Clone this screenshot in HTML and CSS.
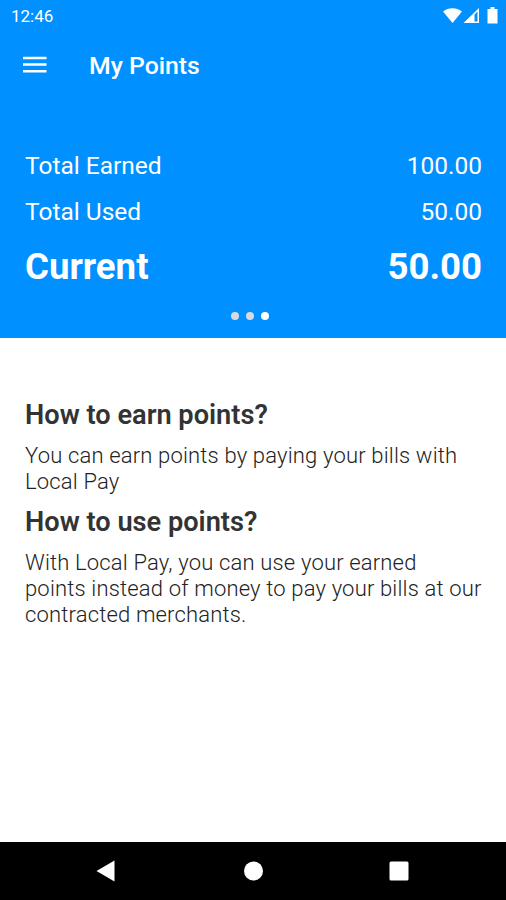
FILE: index.html
```html
<!DOCTYPE html>
<html lang="en">
<head>
    <meta charset="UTF-8">
    <meta name="viewport" content="width=device-width, initial-scale=1.0">
    <title>My Points</title>
    <link rel="stylesheet" href="styles.css">
</head>
<body>
    <header class="header">
        <div class="status-bar">
            <span class="clock">12:46</span>
            <svg class="status-icons" viewBox="0 0 55 18" xmlns="http://www.w3.org/2000/svg">
                <path d="M0 4.500C5 0 14 0 19 4.500L9.500 16z"></path>
                <path fill-rule="evenodd" d="M36 1v15H20.500zM34.500 4.500v10H31.500V7.500z"></path>
                <path d="M47.500 2V0h4v2h3v14.500H44.500V2z"></path>
            </svg>
        </div>
        <div class="toolbar">
            <button class="menu-button" aria-label="Menu">
                <svg class="menu-icon" viewBox="0 0 24 18" xmlns="http://www.w3.org/2000/svg">
                    <path d="M0 2h23.500M0 8.500h23.500M0 15.200h23.500"></path>
                </svg>
            </button>
            <h1>My Points</h1>
        </div>
        <div class="totals">
            <div class="total-row"><span>Total Earned</span><span>100.00</span></div>
            <div class="total-row"><span>Total Used</span><span>50.00</span></div>
            <div class="total-row current"><span>Current</span><span>50.00</span></div>
        </div>
        <div class="dots">
            <span class="dot"></span>
            <span class="dot"></span>
            <span class="dot active"></span>
        </div>
    </header>

    <main class="content">
        <h2>How to earn points?</h2>
        <p>You can earn points by paying your bills with<br>Local Pay</p>
        <h2>How to use points?</h2>
        <p>With Local Pay, you can use your earned<br>points instead of money to pay your bills at our<br>contracted merchants.</p>
    </main>

    <nav class="nav-bar">
        <svg class="nav-icon" viewBox="0 0 20 22" xmlns="http://www.w3.org/2000/svg">
            <path d="M18.500 0.500v21L0.500 11z"></path>
        </svg>
        <svg class="nav-icon" viewBox="0 0 20 22" xmlns="http://www.w3.org/2000/svg">
            <circle cx="10.500" cy="11" r="9.500"></circle>
        </svg>
        <svg class="nav-icon" viewBox="0 0 20 22" xmlns="http://www.w3.org/2000/svg">
            <rect x="0.500" y="1.500" width="19" height="19" rx="1.500"></rect>
        </svg>
    </nav>
</body>
</html>
```

FILE: styles.css
```css
* {
    margin: 0;
    padding: 0;
    box-sizing: border-box;
}

body {
    font-family: Roboto, 'Liberation Sans', sans-serif;
    height: 100vh;
    display: flex;
    flex-direction: column;
    background-color: #fff;
    color: #333;
    overflow: hidden;
}

.header {
    height: 338px;
    flex-shrink: 0;
    background-color: #0090ff;
    color: #fff;
}

.status-bar {
    height: 32px;
    padding: 0 8px 0 11px;
    display: flex;
    justify-content: space-between;
    align-items: center;
}

.clock {
    font-size: 17px;
}

.status-icons {
    width: 55px;
    height: 18px;
    fill: #fff;
}

.toolbar {
    height: 66px;
    padding-left: 23px;
    display: flex;
    align-items: center;
}

.menu-button {
    width: 24px;
    height: 18px;
    border: none;
    background: none;
}

.menu-icon {
    display: block;
    width: 24px;
    height: 18px;
    stroke: #fff;
    stroke-width: 2.6;
}

h1 {
    margin-left: 42px;
    font-size: 24.8px;
    font-weight: 500;
}

.totals {
    padding: 44px 24px 0 25px;
}

.total-row {
    height: 46px;
    display: flex;
    justify-content: space-between;
    align-items: center;
    font-size: 24.5px;
}

.current {
    height: 64px;
    font-size: 36.6px;
    font-weight: 700;
}

.dots {
    margin-top: 14px;
    padding-right: 6px;
    display: flex;
    justify-content: center;
    gap: 7px;
}

.dot {
    width: 8px;
    height: 8px;
    border-radius: 50%;
    background-color: #d9d9df;
}

.active {
    background-color: #fff;
}

.content {
    flex: 1;
    padding: 61px 20px 0 25px;
}

h2 {
    font-size: 27.2px;
    line-height: 32px;
    font-weight: 600;
}

p {
    margin: 12px 0 11px;
    font-size: 22px;
    line-height: 25.9px;
    font-weight: 300;
    letter-spacing: 0.17px;
    white-space: nowrap;
    color: #222;
}

.nav-bar {
    height: 58px;
    padding: 0 97px 0 96px;
    display: flex;
    justify-content: space-between;
    align-items: center;
    background-color: #000;
}

.nav-icon {
    width: 20px;
    height: 22px;
    fill: #fff;
}
```
